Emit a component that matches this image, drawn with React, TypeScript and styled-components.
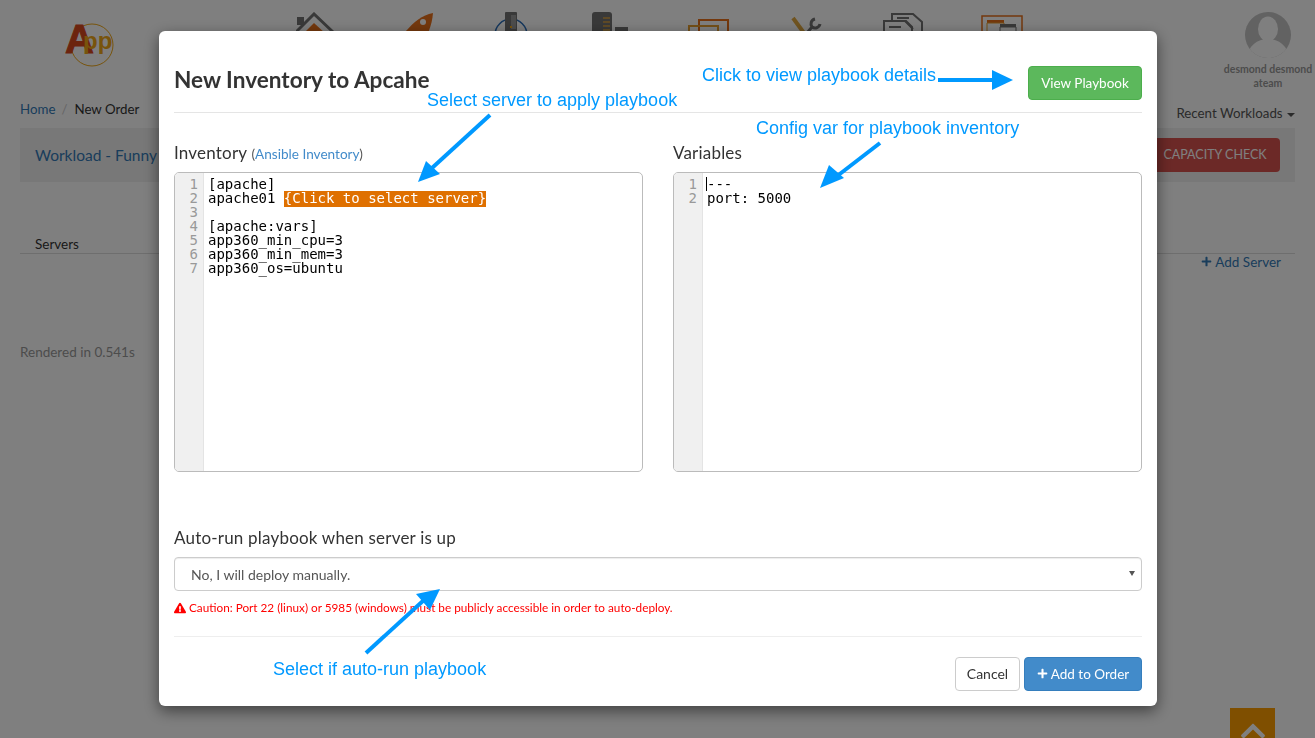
import React from 'react'
import styled, { createGlobalStyle } from 'styled-components'
import { FaPlus, FaExclamationTriangle, FaChevronUp } from 'react-icons/fa'

const baseFont = `Lato, "Open Sans", sans-serif`
const iconDark = '#727272'

const GlobalStyle = createGlobalStyle`
    html, body {
        margin: 0;
        height: 100%;
        overflow: hidden;
        background: #fff;
        font-family: ${baseFont};
        font-size: 14px;
        color: #333;
    }
    * {
        box-sizing: border-box;
    }
`

const inventoryLines = ['[apache]', 'apache01 ', '', '[apache:vars]', 'app360_min_cpu=3', 'app360_min_mem=3', 'app360_os=ubuntu']
const variableLines = ['---', 'port: 5000']

const callouts = [
    { text: 'Select server to apply playbook', x: 427, y: 89 },
    { text: 'Click to view playbook details', x: 702, y: 64 },
    { text: 'Config var for playbook inventory', x: 756, y: 117 },
    { text: 'Select if auto-run playbook', x: 273, y: 658 },
]

const arrows = [
    { line: '490,115 432,168', head: '418,182 426,161 440,174' },
    { line: '938,80 994,80', head: '1013,80 992,70 992,90' },
    { line: '880,143 832,180', head: '820,188 829,165 844,178' },
    { line: '366,653 424,600', head: '440,589 416,594 430,610' },
]

const Logo = () => (
    <LogoBox>
        <svg width="60" height="60" viewBox="0 0 60 60">
            <circle cx="27" cy="32" r="21" fill="none" stroke="#f0a818" strokeWidth="1" />
            <text x="0" y="40" fontFamily="Liberation Sans, sans-serif" fontWeight="700" fontSize="40" fill="#d9481c" stroke="#d9481c">A</text>
            <text x="18" y="36" fontFamily="Liberation Sans, sans-serif" fontWeight="700" fontSize="24" fill="#f0a818">pp</text>
        </svg>
    </LogoBox>
)

const HomeIcon = () => (
    <svg width="40" height="40" viewBox="0 0 40 40">
        <path d="M1 5h7v8H1z" fill={iconDark} />
        <path d="M0 20 18 2l19 18" fill="none" stroke={iconDark} strokeWidth="3" />
        <path d="M7 22 18 11l12 11v10H7z" fill="#e8701a" />
    </svg>
)

const RocketIcon = () => (
    <svg width="40" height="40" viewBox="0 0 40 40">
        <path d="M39 1C28 3 20 10 11 20v10l14 4c8-8 13-20 14-33z" fill="#e8701a" />
        <circle cx="29" cy="10" r="3" fill="#fff" />
    </svg>
)

const ServerIcon = () => (
    <svg width="40" height="40" viewBox="0 0 40 40">
        <circle cx="19" cy="23" r="16" fill="none" stroke="#2a6ebb" strokeWidth="1.5" />
        <rect x="13" y="0" width="12" height="36" rx="1" fill={iconDark} />
        <rect x="19" y="3" width="5" height="14" fill="#999" />
        <rect x="18" y="14" width="2" height="2" fill="#f0a818" />
    </svg>
)

const RackIcon = () => (
    <svg width="40" height="40" viewBox="0 0 40 40">
        <rect x="2" y="0" width="20" height="36" rx="3" fill={iconDark} />
        <path d="M13 6h7M13 10h7M13 14h7M13 18h7" stroke="#d8a040" strokeWidth="1.5" />
        <rect x="25" y="15" width="13" height="21" fill={iconDark} />
    </svg>
)

const WindowsIcon = () => (
    <svg width="42" height="40" viewBox="0 0 42 40">
        <rect x="12" y="8" width="29" height="26" fill="none" stroke="#e8701a" strokeWidth="2" />
        <rect x="2" y="14" width="29" height="24" fill="none" stroke="#e8a030" strokeWidth="2" />
    </svg>
)

const ToolsIcon = () => (
    <svg width="40" height="40" viewBox="0 0 40 40">
        <path d="M7 6l19 26" stroke="#e0a840" strokeWidth="4" />
        <path d="M29 7c-4 1-5 5-3 8L16 27" fill="none" stroke={iconDark} strokeWidth="3" />
        <path d="M26 15c3 2 7 1 8-3" fill="none" stroke={iconDark} strokeWidth="3" />
    </svg>
)

const DocsIcon = () => (
    <svg width="42" height="40" viewBox="0 0 42 40">
        <path d="M9 8V2h21l9 8v24H9" fill="#fff" stroke={iconDark} strokeWidth="2" />
        <path d="M1 9h22l6 6v20H1z" fill="#fff" stroke={iconDark} strokeWidth="2" />
        <path d="M14 6h12M6 15h12M22 9l8 8" stroke={iconDark} strokeWidth="2" />
    </svg>
)

const PanelsIcon = () => (
    <svg width="42" height="40" viewBox="0 0 42 40">
        <rect x="1" y="4" width="40" height="34" fill="none" stroke="#e8701a" strokeWidth="1.5" />
        <rect x="6" y="8" width="17" height="3" fill="#e8701a" />
        <path d="M6 11h17v22H6z" fill="none" stroke="#e8a030" />
        <rect x="19" y="12" width="16" height="3" fill={iconDark} />
        <path d="M19 15h16v20H19z" fill="#fff" stroke={iconDark} />
    </svg>
)

const navIcons = [HomeIcon, RocketIcon, ServerIcon, RackIcon, WindowsIcon, ToolsIcon, DocsIcon, PanelsIcon]

const Editor = (props: { lines: string[]; highlight?: string; cursor?: boolean; width: number }) => {
    return (
        <EditorBox>
            <Gutter $width={props.width}>
                {props.lines.map((_, i) => (
                    <div key={i}>{i + 1}</div>
                ))}
            </Gutter>
            <Code>
                {props.cursor && <Cursor />}
                {props.lines.map((line, i) => (
                    <CodeLine key={i}>
                        {line}
                        {i === 1 && props.highlight && <Marker>{props.highlight}</Marker>}
                    </CodeLine>
                ))}
            </Code>
        </EditorBox>
    )
}

export default function App() {
    return (
        <>
            <GlobalStyle />
            <Page>
                <TopBar>
                    <Logo />
                    <Nav>
                        {navIcons.map((Icon, i) => (
                            <NavItem key={i}>
                                <Icon />
                            </NavItem>
                        ))}
                    </Nav>
                    <UserBlock>
                        <Avatar>
                            <svg width="46" height="46" viewBox="0 0 46 46">
                                <defs>
                                    <clipPath id="avatarClip">
                                        <circle cx="23" cy="23" r="23" />
                                    </clipPath>
                                </defs>
                                <circle cx="23" cy="23" r="23" fill="#c4c4c4" />
                                <g clipPath="url(#avatarClip)" fill="#fff">
                                    <ellipse cx="23" cy="17" rx="10" ry="12.5" />
                                    <ellipse cx="23" cy="44" rx="20" ry="17" />
                                </g>
                            </svg>
                        </Avatar>
                        <UserName>desmond desmond</UserName>
                        <UserName>ateam</UserName>
                    </UserBlock>
                </TopBar>
                <CrumbRow>
                    <Crumbs>
                        <BlueLink>Home</BlueLink>
                        <CrumbSlash>/</CrumbSlash>
                        <span>New Order</span>
                    </Crumbs>
                    <RecentMenu>
                        Recent Workloads <Caret />
                    </RecentMenu>
                </CrumbRow>
                <WorkloadBar>
                    <WorkloadTitle>Workload - Funny</WorkloadTitle>
                    <CapacityButton>CAPACITY CHECK</CapacityButton>
                </WorkloadBar>
                <TabRow>
                    <TabLabel>Servers</TabLabel>
                </TabRow>
                <AddRow>
                    <AddServer>
                        <FaPlus size={11} /> Add Server
                    </AddServer>
                </AddRow>
                <Rendered>Rendered in 0.541s</Rendered>
            </Page>
            <ScrollTop>
                <FaChevronUp size={28} />
            </ScrollTop>
            <Backdrop />
            <Modal>
                <ModalHeader>
                    <ModalTitle>New Inventory to Apcahe</ModalTitle>
                    <GreenButton>View Playbook</GreenButton>
                </ModalHeader>
                <EditorGrid>
                    <div>
                        <FieldLabel>
                            Inventory <LabelNote>(<NoteLink>Ansible Inventory</NoteLink>)</LabelNote>
                        </FieldLabel>
                        <Editor lines={inventoryLines} highlight="{Click to select server}" width={29} />
                    </div>
                    <div>
                        <FieldLabel>Variables</FieldLabel>
                        <Editor lines={variableLines} cursor width={29} />
                    </div>
                </EditorGrid>
                <AutoRun>
                    <FieldLabel>Auto-run playbook when server is up</FieldLabel>
                    <SelectWrap>
                        <DeploySelect defaultValue="manual">
                            <option value="manual">No, I will deploy manually.</option>
                        </DeploySelect>
                    </SelectWrap>
                    <Caution>
                        <FaExclamationTriangle size={12} /> Caution: Port 22 (linux) or 5985 (windows) must be publicly accessible in order to auto-deploy.
                    </Caution>
                </AutoRun>
                <ModalFooter>
                    <CancelButton>Cancel</CancelButton>
                    <PrimaryButton>
                        <FaPlus size={11} /> Add to Order
                    </PrimaryButton>
                </ModalFooter>
            </Modal>
            {callouts.map((c) => (
                <Callout key={c.text} $x={c.x} $y={c.y}>
                    {c.text}
                </Callout>
            ))}
            <ArrowLayer viewBox="0 0 1315 738">
                {arrows.map((a) => (
                    <g key={a.line}>
                        <polyline points={a.line} fill="none" stroke="#0099ff" strokeWidth="4" />
                        <polygon points={a.head} fill="#0099ff" />
                    </g>
                ))}
            </ArrowLayer>
        </>
    )
}

const Page = styled.div`
    height: 738px;
    padding: 0 20px;
    overflow: hidden;
`

const TopBar = styled.header`
    display: flex;
    align-items: flex-start;
    height: 100px;
`

const LogoBox = styled.div`
    width: 247px;
    padding: 13px 0 0 45px;
`

const Nav = styled.nav`
    display: flex;
    padding-top: 12px;
`

const NavItem = styled.div`
    width: 98px;
    display: flex;
    justify-content: center;
`

const UserBlock = styled.div`
    margin-left: auto;
    margin-right: -18px;
    width: 90px;
    padding-top: 12px;
    display: flex;
    flex-direction: column;
    align-items: center;
`

const Avatar = styled.div`
    height: 50px;
`

const UserName = styled.div`
    font-size: 10.5px;
    font-weight: 700;
    line-height: 14px;
    color: #999;
    white-space: nowrap;
`

const CrumbRow = styled.div`
    display: flex;
    justify-content: space-between;
    height: 28px;
    line-height: 18px;
`

const Crumbs = styled.div`
    font-size: 13.3px;
`

const BlueLink = styled.span`
    color: #337ab7;
`

const CrumbSlash = styled.span`
    color: #ccc;
    padding: 0 7px 0 6px;
`

const RecentMenu = styled.div`
    padding-top: 4px;
    font-size: 13.3px;
    color: #555;
`

const Caret = styled.span`
    display: inline-block;
    width: 0;
    height: 0;
    margin-left: 1px;
    vertical-align: middle;
    border-top: 4px solid #555;
    border-left: 4px solid transparent;
    border-right: 4px solid transparent;
`

const WorkloadBar = styled.div`
    display: flex;
    align-items: center;
    justify-content: space-between;
    height: 54px;
    padding: 0 15px;
    background: #f0f0f0;
`

const WorkloadTitle = styled.div`
    padding-bottom: 1px;
    font-size: 15.5px;
    color: #337ab7;
`

const CapacityButton = styled.div`
    width: 130px;
    height: 34px;
    line-height: 34px;
    text-align: center;
    font-size: 12.5px;
    color: #fff;
    background: #d9534f;
    border-radius: 4px;
`

const TabRow = styled.div`
    height: 72px;
    padding: 53px 15px 0;
    border-bottom: 1px solid #ddd;
`

const TabLabel = styled.div`
    font-size: 13.5px;
    line-height: 18px;
    color: #333;
`

const AddRow = styled.div`
    display: flex;
    justify-content: flex-end;
    padding: 0 14px;
    height: 89px;
    align-items: flex-start;
`

const AddServer = styled.div`
    font-size: 13.5px;
    line-height: 16px;
    color: #337ab7;
`

const Rendered = styled.div`
    font-size: 13.5px;
    line-height: 18px;
    color: #999;
`

const ScrollTop = styled.div`
    position: fixed;
    left: 1230px;
    top: 708px;
    width: 45px;
    height: 45px;
    display: flex;
    align-items: center;
    justify-content: center;
    background: #ff9f00;
    color: #fff;
`

const Backdrop = styled.div`
    position: fixed;
    inset: 0;
    background: rgba(0, 0, 0, 0.5);
`

const Modal = styled.div`
    position: fixed;
    left: 159px;
    top: 31px;
    width: 998px;
    height: 675px;
    padding: 0 15px;
    background: #fff;
    border-radius: 6px;
    box-shadow: 0 5px 15px rgba(0, 0, 0, 0.5);
`

const ModalHeader = styled.div`
    display: flex;
    align-items: flex-end;
    justify-content: space-between;
    height: 82px;
    padding-bottom: 12px;
    border-bottom: 1px solid #e5e5e5;
`

const ModalTitle = styled.h4`
    margin: 0 0 7px;
    font-size: 22.6px;
    line-height: 26px;
    font-weight: 700;
    color: #333;
`

const GreenButton = styled.div`
    width: 114px;
    height: 34px;
    line-height: 32px;
    text-align: center;
    font-size: 13.5px;
    color: #fff;
    background: #5cb85c;
    border: 1px solid #4cae4c;
    border-radius: 4px;
`

const EditorGrid = styled.div`
    display: grid;
    grid-template-columns: 469px 469px;
    column-gap: 30px;
    padding-top: 28px;
`

const FieldLabel = styled.div`
    height: 31px;
    font-size: 17px;
    line-height: 24px;
    letter-spacing: 0.2px;
    color: #333;
`

const LabelNote = styled.span`
    font-size: 13.6px;
    letter-spacing: 0;
    color: #555;
`

const NoteLink = styled.span`
    color: #428bca;
`

const EditorBox = styled.div`
    display: flex;
    height: 300px;
    border: 1px solid #bbb;
    border-radius: 5px;
    overflow: hidden;
    font-family: "DejaVu Sans Mono", monospace;
    font-size: 14px;
    line-height: 14px;
`

const Gutter = styled.div<{ $width: number }>`
    width: ${(props) => props.$width}px;
    flex: none;
    padding: 4px 5px 0 0;
    background: #f0f0f0;
    border-right: 1px solid #e4e4e4;
    text-align: right;
    color: #999;
`

const Code = styled.div`
    position: relative;
    flex: 1;
    padding: 4px 0 0 4px;
    color: #000;
`

const CodeLine = styled.div`
    height: 14px;
    white-space: pre;
`

const Marker = styled.span`
    display: inline-block;
    height: 16px;
    background: #df7000;
    color: #fff;
`

const Cursor = styled.div`
    position: absolute;
    left: 3px;
    top: 4px;
    width: 1px;
    height: 14px;
    background: #000;
`

const AutoRun = styled.div`
    padding-top: 54px;
`

const SelectWrap = styled.div`
    position: relative;

    &::after {
        content: "";
        position: absolute;
        right: 7px;
        top: 14px;
        width: 0;
        height: 0;
        border-top: 5px solid #555;
        border-left: 3px solid transparent;
        border-right: 3px solid transparent;
    }
`

const DeploySelect = styled.select`
    display: block;
    width: 100%;
    height: 34px;
    padding: 6px 16px;
    appearance: none;
    font-family: ${baseFont};
    font-size: 14px;
    color: #555;
    background: #fff;
    border: 1px solid #ccc;
    border-radius: 4px;
    box-shadow: inset 0 1px 1px rgba(0, 0, 0, 0.075);
`

const Caution = styled.div`
    height: 46px;
    padding-top: 10px;
    font-size: 11.75px;
    line-height: 14px;
    color: #f00;
    border-bottom: 1px solid #eee;

    svg {
        vertical-align: -2px;
    }
`

const ModalFooter = styled.div`
    display: flex;
    justify-content: flex-end;
    gap: 4px;
    padding-top: 20px;
`

const CancelButton = styled.div`
    width: 65px;
    height: 34px;
    line-height: 32px;
    text-align: center;
    font-size: 14px;
    color: #333;
    background: #fff;
    border: 1px solid #ccc;
    border-radius: 4px;
`

const PrimaryButton = styled.div`
    width: 118px;
    height: 34px;
    line-height: 32px;
    text-align: center;
    font-size: 13.5px;
    color: #fff;
    background: #428bca;
    border: 1px solid #357ebd;
    border-radius: 4px;
`

const Callout = styled.div<{ $x: number; $y: number }>`
    position: fixed;
    left: ${(props) => props.$x}px;
    top: ${(props) => props.$y}px;
    font-family: "Liberation Sans", Arial, sans-serif;
    font-size: 18px;
    line-height: 22px;
    white-space: nowrap;
    color: #0099ff;
`

const ArrowLayer = styled.svg`
    position: fixed;
    inset: 0;
    width: 1315px;
    height: 738px;
    pointer-events: none;
`
